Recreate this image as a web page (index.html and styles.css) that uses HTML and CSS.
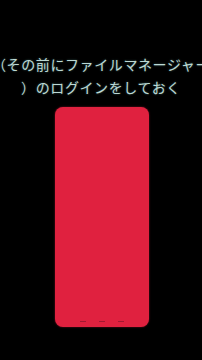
FILE: index.html
```html
<!DOCTYPE html>
<html lang="ja">
<head>
<meta charset="utf-8">
<link rel="stylesheet" href="styles.css">
</head>
<body>
<div class="screen">
  <div class="caption">
    <div class="line">（その前にファイルマネージャー</div>
    <div class="line">）のログインをしておく</div>
  </div>
  <div class="phone">
    <div class="nav">
      <span class="navmark"></span>
      <span class="navmark"></span>
      <span class="navmark"></span>
    </div>
  </div>
</div>
</body>
</html>
```
FILE: styles.css
```css
html, body {
  margin: 0;
  padding: 0;
  background: #000;
}
.screen {
  width: 202px;
  height: 360px;
  overflow: hidden;
  background: #000;
  display: flex;
  flex-direction: column;
  align-items: center;
}
.caption {
  margin-top: 53px;
  width: 202px;
  display: flex;
  flex-direction: column;
  align-items: center;
  font-family: "Noto Sans CJK JP", "Noto Sans", sans-serif;
  font-size: 14px;
  line-height: 23px;
  letter-spacing: 0.6px;
  color: #bcd8d4;
  text-shadow: 0 0 2px rgba(120, 200, 190, 0.5);
}
.line {
  white-space: nowrap;
}
.phone {
  margin-top: 8px;
  margin-left: 2px;
  width: 94px;
  height: 220px;
  background: #e0213f;
  border-radius: 8px;
  display: flex;
  flex-direction: column;
  justify-content: flex-end;
  box-shadow: 0 0 2px rgba(224, 33, 63, 0.6);
}
.nav {
  display: flex;
  justify-content: space-around;
  padding: 0 18px 5px;
}
.navmark {
  width: 6px;
  height: 1px;
  background: rgba(120, 20, 40, 0.6);
}
```
